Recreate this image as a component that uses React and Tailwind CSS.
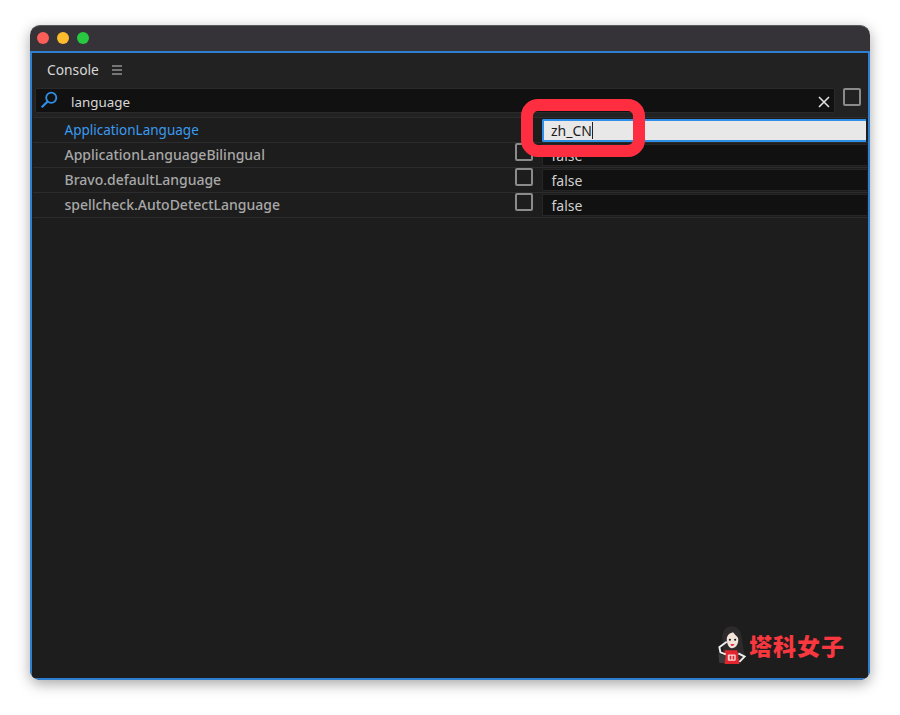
const rows = [
  { name: "ApplicationLanguageBilingual" },
  { name: "Bravo.defaultLanguage" },
  { name: "spellcheck.AutoDetectLanguage" },
];

function Mascot() {
  return (
    <svg width="32" height="40" viewBox="0 0 30 38" className="shrink-0">
      <path d="M8 4 C11 0 19 0 22 5 C25 10 25 20 27 28 C27 33 24 36 20 37 L8 37 C6 30 7 22 6 16 C5 11 6 7 8 4 Z" fill="#2c2a2a" />
      <path d="M10 13 C11 8 14 8 16 7 C18 10 21 11 21 14 C21 19 18 22 15 22 C12 22 10 18 10 13 Z" fill="#f3e4da" />
      <circle cx="13" cy="14" r="1" fill="#111" />
      <circle cx="18" cy="14" r="1" fill="#111" />
      <path d="M13.5 18 H17.5 L16 20 H14.5 Z" fill="#e8343f" />
      <path d="M8 24 L20 24 L22 37 L8 37 Z" fill="#e3262e" />
      <path d="M10 16 L3 21 L4 26 L9 28" fill="none" stroke="#eee" strokeWidth="1.8" />
      <path d="M21 27 L27 30 L22 35" fill="none" stroke="#eee" strokeWidth="1.8" />
      <path d="M2 27 L9 29 L8 36 L3 36 Z" fill="#3a3a3a" />
      <rect x="11" y="28" width="7.5" height="6" rx="1" fill="#f6d9d9" />
      <rect x="12.8" y="29.2" width="1.6" height="3.6" fill="#e3262e" />
      <rect x="15.6" y="29.2" width="1.6" height="3.6" fill="#e3262e" />
    </svg>
  );
}

function Check({ className = "" }) {
  return <div className={`w-[18px] h-[18px] rounded-[2px] border-[2.5px] border-[#8b8b8b] ${className}`} />;
}

export default function App() {
  return (
    <div className="w-[900px] h-[715px] bg-white pl-[30px] pt-[25px] overflow-hidden font-['Noto_Sans','Noto_Sans_CJK_TC',sans-serif]">
      <div className="relative w-[840px] h-[655px] rounded-[10px] bg-[#353337] border-t border-[#5a595c] shadow-[0_4px_14px_rgba(0,0,0,0.35)] flex flex-col overflow-hidden">
        <div className="h-[25px] shrink-0 flex items-center gap-[8px] pl-[7px] pb-[1px]">
          <span className="w-[12px] h-[12px] rounded-full bg-[#fb5e58]" />
          <span className="w-[12px] h-[12px] rounded-full bg-[#fdbc2e]" />
          <span className="w-[12px] h-[12px] rounded-full bg-[#28c840]" />
        </div>
        <div className="flex-1 min-h-0 flex flex-col bg-[#1d1d1d] border-2 border-[#2f7fd0] rounded-b-[9px]">
          <div className="h-[35px] shrink-0 flex items-center pl-[15px] gap-[13px] pb-[1px] text-[13.8px] text-[#d8d8d8] bg-[#222222]">
            <span>Console</span>
            <svg width="12" height="12" viewBox="0 0 12 12" stroke="#c8c8c8" strokeWidth="1.2" className="-ml-[1px]">
              <path d="M1 2 H11 M1 6 H11 M1 10 H11" />
            </svg>
          </div>
          <div className="h-[29px] shrink-0 flex items-start pl-[3px] bg-[#222222]">
            <div className="w-[800px] h-[25px] flex items-center bg-[#111111] border border-[#2a2a2a] rounded-[2px] pl-[4px] pr-[2px] pt-[3px]">
              <svg width="18" height="18" viewBox="0 0 16 16" fill="none" stroke="#2f8fe8" strokeWidth="1.6" className="shrink-0 -mt-[4px]">
                <circle cx="10" cy="6" r="4.5" />
                <path d="M6.8 9.3 L1.5 14.5" strokeWidth="2" />
              </svg>
              <span className="ml-[13px] text-[13.4px] text-[#d8d8d8]">language</span>
              <svg width="12" height="12" viewBox="0 0 12 12" stroke="#e0e0e0" strokeWidth="1.6" className="ml-auto mr-[2px] shrink-0">
                <path d="M1 1 L11 11 M11 1 L1 11" />
              </svg>
            </div>
            <Check className="ml-[8px]" />
          </div>
          <div className="flex-1 pl-[1px] bg-[#1d1d1d]">
            <div className="h-[26px] flex items-center border-y border-[#2c2c2c] relative">
              <span className="ml-[31.5px] text-[13.5px] text-[#3a9bf0]">ApplicationLanguage</span>
              <div className="absolute left-[509px] top-[1px] w-[324px] h-[23px] bg-[#e8e8e8] border-2 border-[#2f8fe8] border-r-0 rounded-l-[2px] flex items-center pl-[7px] text-[14px] text-[#1c1c1c]">
                zh_CN<span className="w-[1px] h-[17px] bg-[#222]" />
              </div>
            </div>
            {rows.map((r) => (
              <div key={r.name} className="h-[25px] flex items-center border-b border-[#2c2c2c] pr-[1px]">
                <span className="ml-[31.5px] -mt-[1px] w-[450px] text-[14px] font-medium text-[#a8a8a8]">{r.name}</span>
                <Check className="-mt-[6px]" />
                <div className="ml-[9px] flex-1 h-[22px] bg-[#111111] border border-[#262626] border-r-0 flex items-center pl-[9px] text-[14px] text-[#d0d0d0] pt-[1px]">
                  false
                </div>
              </div>
            ))}
          </div>
          <div className="shrink-0 h-[48px] flex items-start justify-end pr-[23px] gap-[2px] -mt-[48px] relative">
            <div className="-mt-[5px] -mr-[1px]"><Mascot /></div>
            <span className="text-[23px] leading-[30px] font-black tracking-[1px] text-[#f8373f] font-['Noto_Sans_CJK_TC',sans-serif]">塔科女子</span>
          </div>
        </div>
        <div className="absolute left-[491px] top-[73px] w-[124px] h-[58px] rounded-[17px] border-[12px] border-[#fe2e40]" />
      </div>
    </div>
  );
}
